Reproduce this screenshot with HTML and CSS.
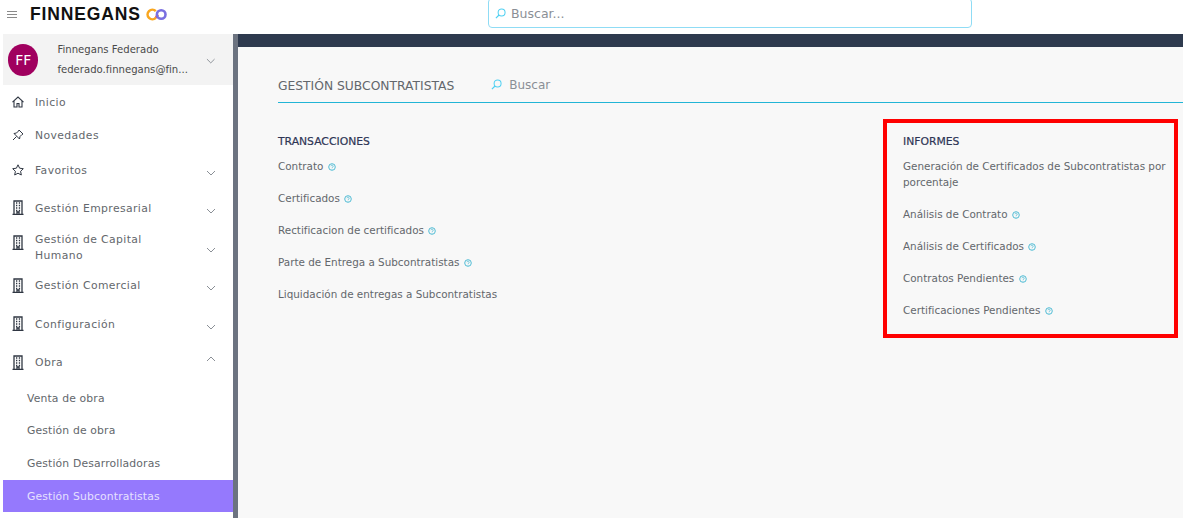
FILE: index.html
```html
<!DOCTYPE html>
<html lang="es">
<head>
    <meta charset="UTF-8">
    <meta name="viewport" content="width=device-width, initial-scale=1.0">
    <title>Finnegans - Gestión Subcontratistas</title>
    <link rel="stylesheet" href="styles.css">
</head>
<body>
    <svg class="icon-defs" width="0" height="0">
        <symbol id="building" viewBox="0 0 12 15">
            <path d="M2 14V1h8v13M0.500 14.300h11M4 3h1.300M6.800 3h1.300M4 5.500h1.300M6.800 5.500h1.300M4 8h1.300M6.800 8h1.300M4 10.500h1.300M6.800 10.500h1.300M5 14v-2h2v2" fill="none" stroke="currentColor" stroke-width="1.300"/>
        </symbol>
        <symbol id="chevron" viewBox="0 0 10 6">
            <path d="M1 1l4 4 4-4" fill="none" stroke="currentColor" stroke-width="1"/>
        </symbol>
        <symbol id="search" viewBox="0 0 12 12">
            <circle cx="7.200" cy="4.800" r="3.800" fill="none" stroke="currentColor" stroke-width="1.100"/>
            <path d="M4.400 7.600L1 11" fill="none" stroke="currentColor" stroke-width="1.300"/>
        </symbol>
        <symbol id="help" viewBox="0 0 8 8">
            <circle cx="4" cy="4" r="3.300" fill="none" stroke="currentColor" stroke-width="0.900"/>
            <path d="M2.800 3.200a1.200 1.100 0 1 1 1.700 1.100c-.4.200-.5.400-.5.800M4 5.900v.5" fill="none" stroke="currentColor" stroke-width="0.700"/>
        </symbol>
    </svg>

    <header class="topbar">
        <div class="brand">
            <div class="burger"><span></span><span></span><span></span></div>
            <span class="brand-name">FINNEGANS</span>
            <svg class="brand-logo" viewBox="0 0 21 13" width="21" height="13">
                <path d="M9.800 3.100a4.800 4.800 0 1 0 0 6.800" fill="none" stroke="#f9a61f" stroke-width="2.600"/>
                <path d="M9.800 9.900l2-3.400" fill="none" stroke="#ee6a4d" stroke-width="2.600"/>
                <circle cx="15.200" cy="6.500" r="4.300" fill="none" stroke="#7a6fe0" stroke-width="2.600"/>
            </svg>
        </div>
        <div class="top-search">
            <svg class="search-icon"><use href="#search"/></svg>
            <span>Buscar...</span>
        </div>
    </header>

    <div class="layout">
        <aside class="sidebar">
            <div class="user-box">
                <div class="avatar">FF</div>
                <div class="user-text">
                    <div>Finnegans Federado</div>
                    <div>federado.finnegans@fin...</div>
                </div>
                <svg class="chevron"><use href="#chevron"/></svg>
            </div>
            <nav class="menu">
                <a class="menu-item short">
                    <svg class="menu-icon" viewBox="0 0 12 12"><path d="M0.500 6.200L6 1l5.500 5.200M2 4.800V11h3V7.500h2V11h3V4.800" fill="none" stroke="currentColor" stroke-width="1.100"/></svg>
                    <span>Inicio</span>
                </a>
                <a class="menu-item short">
                    <svg class="menu-icon" viewBox="0 0 12 12"><path d="M7 1l4 4-1 .5-2 2L7.500 10 2 4.500 4.500 4l2-2zM4.500 7.500L1 11" fill="none" stroke="currentColor"/></svg>
                    <span>Novedades</span>
                </a>
                <a class="menu-item fav">
                    <svg class="menu-icon" viewBox="0 0 12 12"><path d="M6 .8l1.600 3.400 3.700.5-2.700 2.600.7 3.700L6 9.200 2.700 11l.7-3.700L.7 4.700l3.700-.5z" fill="none" stroke="currentColor"/></svg>
                    <span>Favoritos</span>
                    <svg class="chevron"><use href="#chevron"/></svg>
                </a>
                <a class="menu-item emp">
                    <svg class="menu-icon tall"><use href="#building"/></svg>
                    <span>Gestión Empresarial</span>
                    <svg class="chevron"><use href="#chevron"/></svg>
                </a>
                <a class="menu-item capital">
                    <svg class="menu-icon tall"><use href="#building"/></svg>
                    <span>Gestión de Capital<br>Humano</span>
                    <svg class="chevron"><use href="#chevron"/></svg>
                </a>
                <a class="menu-item com">
                    <svg class="menu-icon tall"><use href="#building"/></svg>
                    <span>Gestión Comercial</span>
                    <svg class="chevron"><use href="#chevron"/></svg>
                </a>
                <a class="menu-item conf">
                    <svg class="menu-icon tall"><use href="#building"/></svg>
                    <span>Configuración</span>
                    <svg class="chevron"><use href="#chevron"/></svg>
                </a>
                <a class="menu-item obra">
                    <svg class="menu-icon tall"><use href="#building"/></svg>
                    <span>Obra</span>
                    <svg class="chevron up"><use href="#chevron"/></svg>
                </a>
                <a class="sub-item">Venta de obra</a>
                <a class="sub-item">Gestión de obra</a>
                <a class="sub-item">Gestión Desarrolladoras</a>
                <a class="sub-item active">Gestión Subcontratistas</a>
            </nav>
        </aside>

        <main class="content">
            <div class="dark-bar"></div>
            <div class="section-head">
                <span class="section-title">GESTIÓN SUBCONTRATISTAS</span>
                <svg class="search-icon"><use href="#search"/></svg>
                <span class="section-search">Buscar</span>
            </div>
            <div class="columns">
                <section class="col">
                    <h3>TRANSACCIONES</h3>
                    <a class="link">Contrato <svg class="help"><use href="#help"/></svg></a>
                    <a class="link">Certificados <svg class="help"><use href="#help"/></svg></a>
                    <a class="link">Rectificacion de certificados <svg class="help"><use href="#help"/></svg></a>
                    <a class="link">Parte de Entrega a Subcontratistas <svg class="help"><use href="#help"/></svg></a>
                    <a class="link">Liquidación de entregas a Subcontratistas</a>
                </section>
                <section class="col col-marked">
                    <h3>INFORMES</h3>
                    <a class="link">Generación de Certificados de Subcontratistas por porcentaje</a>
                    <a class="link">Análisis de Contrato <svg class="help"><use href="#help"/></svg></a>
                    <a class="link">Análisis de Certificados <svg class="help"><use href="#help"/></svg></a>
                    <a class="link">Contratos Pendientes <svg class="help"><use href="#help"/></svg></a>
                    <a class="link">Certificaciones Pendientes <svg class="help"><use href="#help"/></svg></a>
                </section>
            </div>
        </main>
    </div>
</body>
</html>
```

FILE: styles.css
```css
* {
    box-sizing: border-box;
}
html, body {
    height: 100%;
}
body {
    margin: 0;
    width: 1183px;
    height: 518px;
    overflow: hidden;
    font-family: 'DejaVu Sans', sans-serif;
    font-size: 10.400px;
    color: #63676c;
    background: white;
}
.icon-defs {
    position: absolute;
}
.topbar {
    height: 34px;
    position: relative;
}
.brand {
    display: flex;
    align-items: center;
    height: 28px;
    padding-left: 7px;
}
.burger {
    width: 10px;
    margin-right: 13px;
}
.burger span {
    display: block;
    height: 1px;
    background: #8a8a8a;
    margin: 2px 0;
}
.brand-name {
    font-family: 'Liberation Sans', sans-serif;
    font-size: 17.500px;
    font-weight: bold;
    color: #111;
    letter-spacing: 0.850px;
}
.brand-logo {
    margin-left: 5px;
}
.top-search {
    position: absolute;
    left: 488px;
    top: -2px;
    width: 484px;
    height: 30px;
    border: 1px solid #8fdcf5;
    border-radius: 4px;
    display: flex;
    align-items: center;
    gap: 5px;
    padding-left: 6px;
    font-size: 12.500px;
    color: #8a8f96;
}
.search-icon {
    width: 11px;
    height: 11px;
    color: #4fd0f2;
}
.layout {
    display: flex;
    height: 484px;
}
.sidebar {
    width: 238px;
    padding-left: 3px;
    border-right: 5px solid #6c7380;
    flex-shrink: 0;
}
.user-box {
    height: 51px;
    background: #f3f3f3;
    display: flex;
    align-items: center;
    padding-left: 5px;
    font-size: 10.100px;
    color: #4a4a4a;
}
.avatar {
    width: 32px;
    height: 32px;
    border-radius: 50%;
    background: #a0005f;
    color: white;
    font-size: 14px;
    display: flex;
    align-items: center;
    justify-content: center;
    margin-right: 19px;
}
.user-text {
    width: 143px;
    line-height: 20px;
    white-space: nowrap;
}
.chevron {
    width: 10px;
    height: 6px;
    color: #8a8f96;
    margin-left: auto;
    margin-right: 17px;
    margin-top: 6px;
}
.chevron.up {
    transform: rotate(180deg);
    margin-top: -6px;
}
.user-box .chevron {
    margin-left: 13px;
    margin-top: 3px;
}
.menu-item {
    display: flex;
    align-items: center;
    padding-left: 9px;
    line-height: 16px;
    font-size: 10.800px;
    letter-spacing: 0.400px;
}
.menu-item span {
    padding-top: 2px;
}
.menu-icon {
    width: 12px;
    height: 12px;
    color: #2f3642;
    margin-right: 11px;
    flex-shrink: 0;
}
.menu-icon.tall {
    height: 15px;
}
.short {
    height: 33px;
}
.fav {
    height: 37px;
}
.emp {
    height: 39px;
}
.capital {
    height: 39px;
}
.capital .menu-icon {
    margin-top: -8px;
}
.com {
    height: 38px;
}
.conf {
    height: 39px;
}
.obra {
    height: 38px;
}
.sub-item {
    display: block;
    height: 33px;
    line-height: 33px;
    padding-left: 24px;
    font-size: 10.800px;
    letter-spacing: 0.150px;
}
.obra + .sub-item {
    line-height: 35px;
}
.sub-item.active {
    background: #9579fd;
    color: #e6e0ff;
    height: 32px;
    line-height: 34px;
}
.content {
    flex: 1;
    background: #f8f8f8;
    padding-left: 40px;
}
.dark-bar {
    height: 13px;
    background: #2e3a4e;
    margin-left: -40px;
}
.section-head {
    display: flex;
    align-items: center;
    height: 43px;
    margin-top: 13px;
    border-bottom: 1px solid #22b5d6;
    padding-top: 9px;
}
.section-title {
    font-size: 12.300px;
    margin-right: 37px;
}
.section-head .search-icon {
    margin-right: 7px;
    margin-top: -2px;
}
.section-search {
    color: #8a8f96;
    font-size: 12px;
    margin-top: -2px;
}
.columns {
    display: flex;
}
.col {
    width: 605px;
    padding-top: 30px;
}
.col-marked {
    width: 295px;
    outline: 4px solid red;
    outline-offset: -4px;
    margin-top: 16px;
    height: 219px;
    padding: 14px 9px 0 20px;
}
.col h3 {
    margin: 0 0 7px;
    font-size: 10.800px;
    line-height: 18px;
    font-weight: normal;
    color: #2e3555;
    -webkit-text-stroke: 0.2px #2e3555;
}
.link {
    display: block;
    line-height: 16px;
    margin-bottom: 16px;
}
.help {
    width: 8px;
    height: 8px;
    color: #3fb5d0;
    margin-left: 1px;
    vertical-align: -0.5px;
}
```
